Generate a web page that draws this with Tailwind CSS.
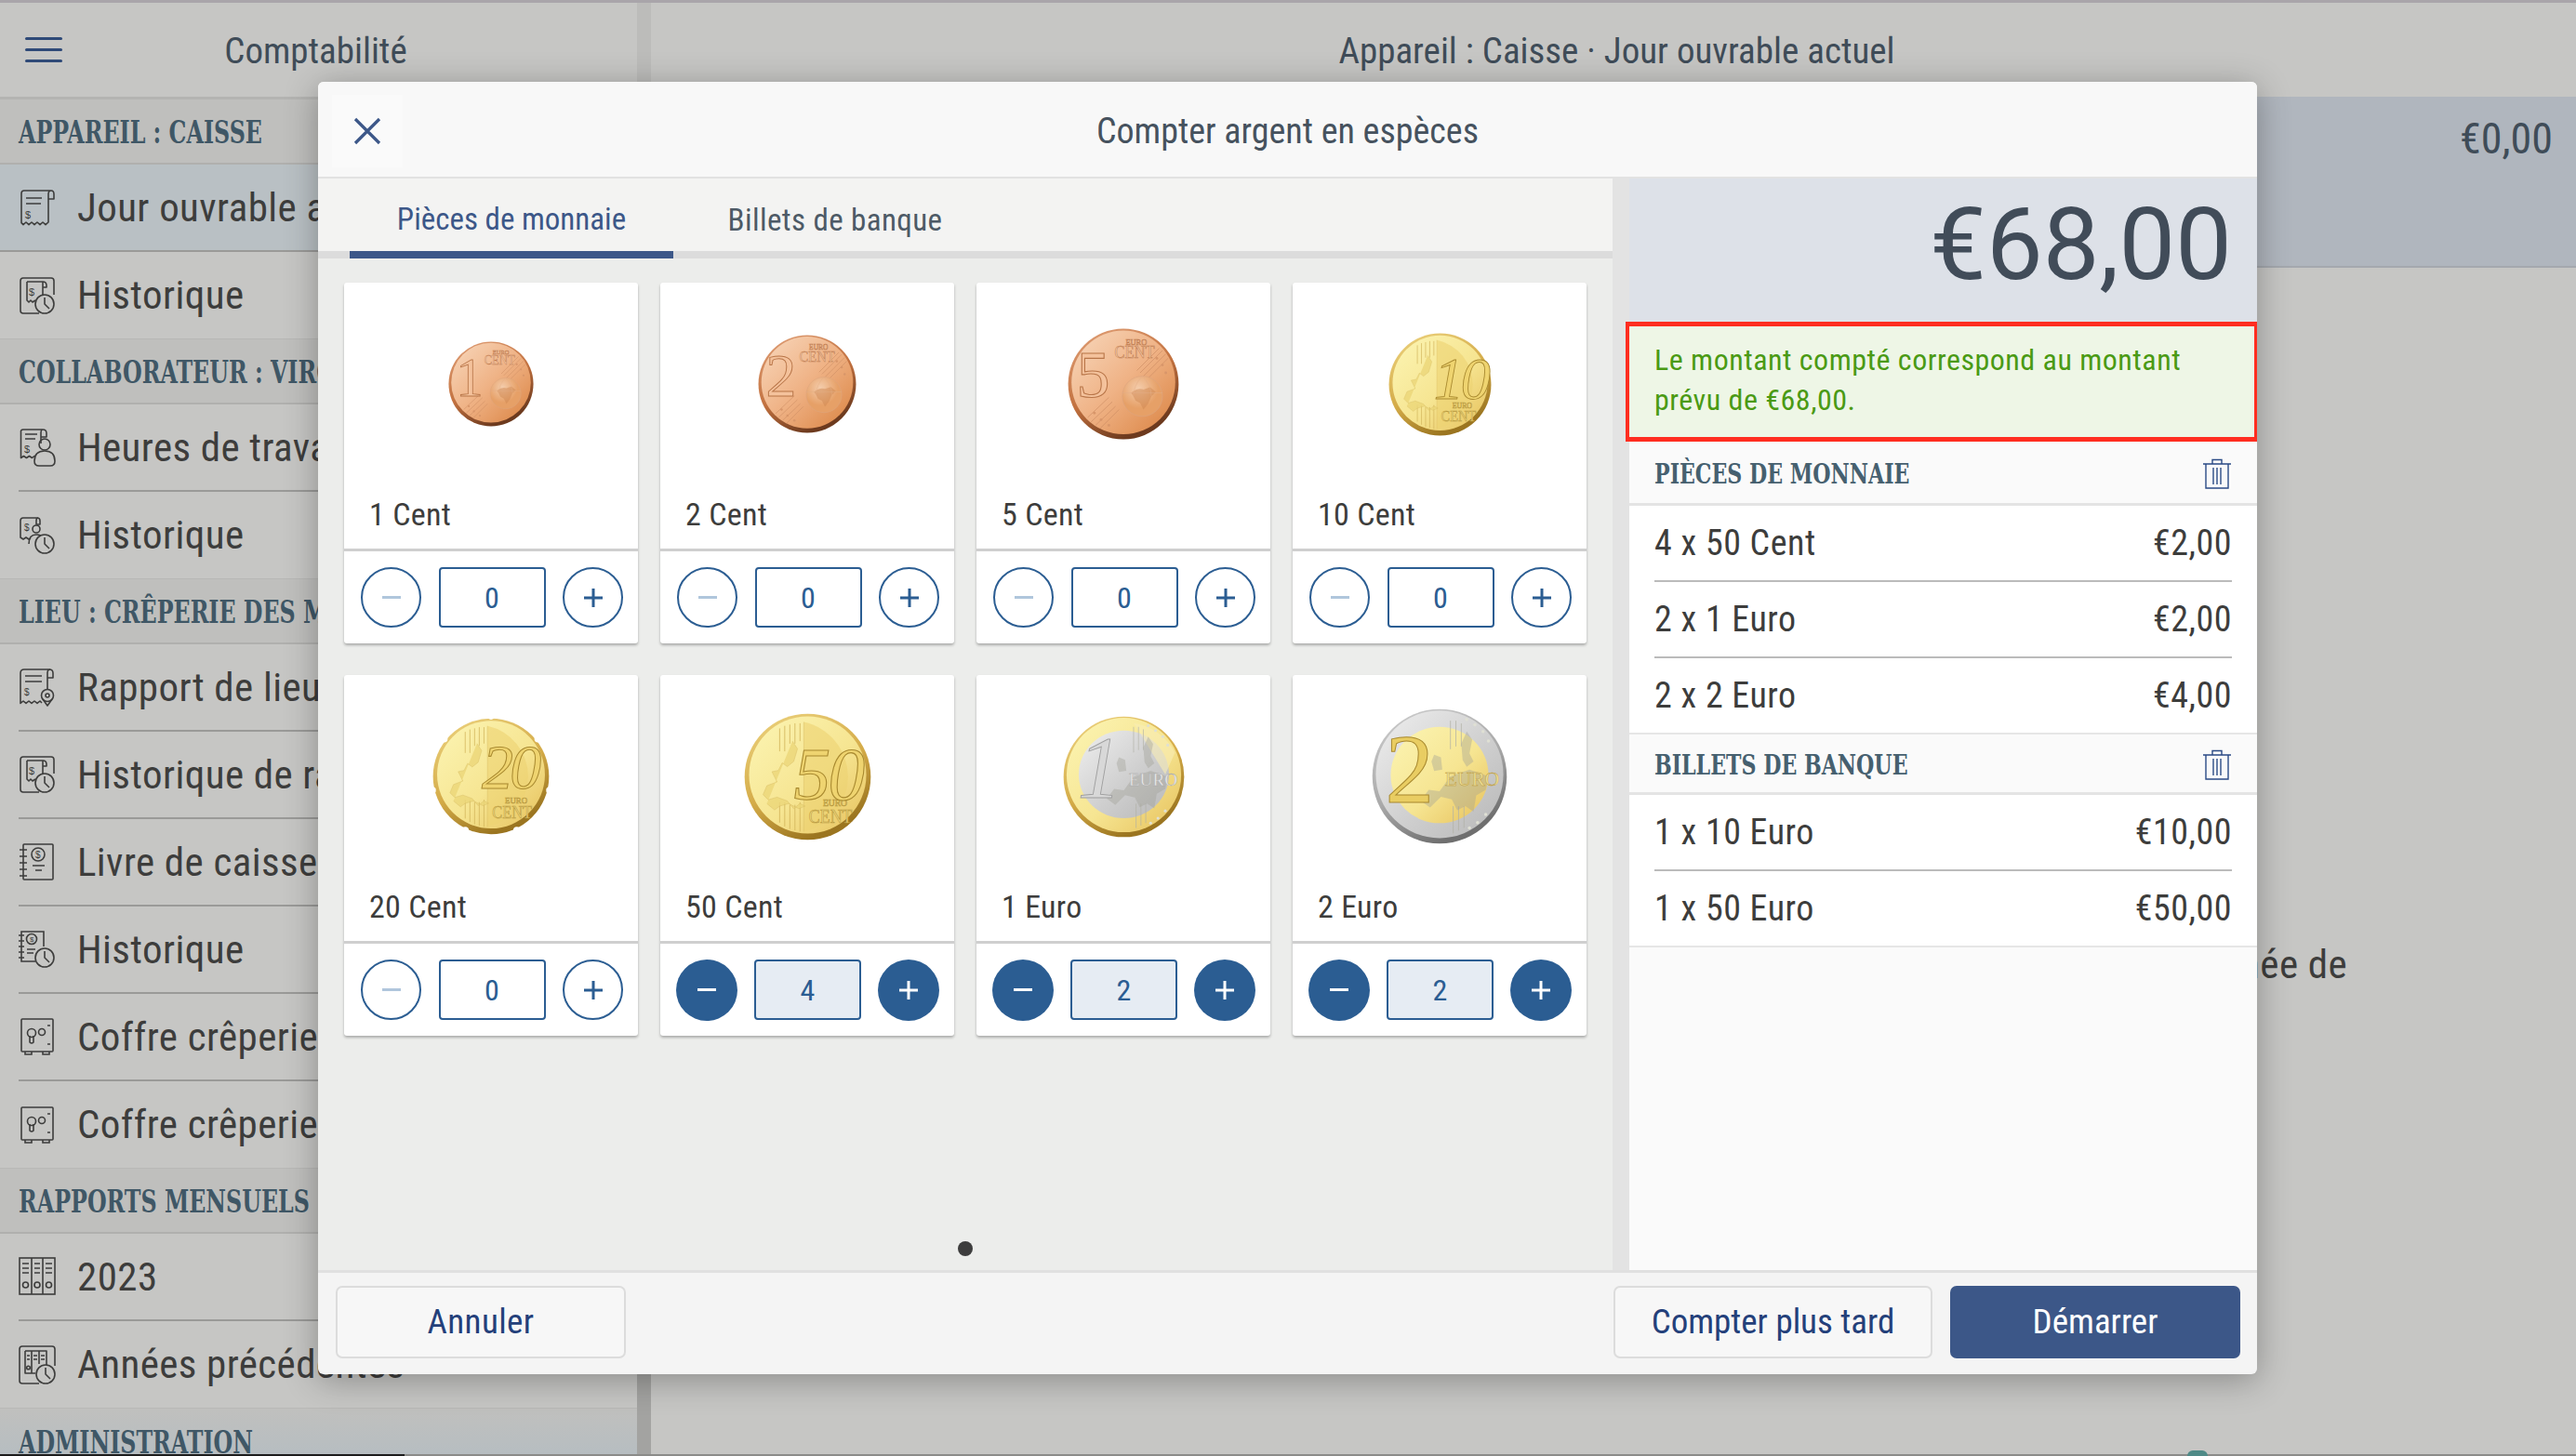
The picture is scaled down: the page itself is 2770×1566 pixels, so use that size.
<html lang="fr">
<head>
  <meta charset="utf-8"/>
  <meta content="width=device-width, initial-scale=1.0" name="viewport"/>
  <title>Compter argent en espèces</title>
  <script src="https://cdn.jsdelivr.net/npm/@tailwindcss/browser@4"></script>
</head>
<body class="bg-[#c6c6c4]">
<!-- shared icons and coin parts -->
<svg class="absolute w-0 h-0" aria-hidden="true">
  <defs>
    <linearGradient id="cu" x1="0" y1="0" x2="1" y2="1"><stop offset="0" stop-color="#f8d8bd"/><stop offset=".5" stop-color="#efb285"/><stop offset="1" stop-color="#da8240"/></linearGradient>
    <linearGradient id="cuRim" x1="0" y1="0" x2=".5" y2="1"><stop offset="0" stop-color="#e2a27a"/><stop offset=".6" stop-color="#c2713f"/><stop offset="1" stop-color="#6d3a1e"/></linearGradient>
    <radialGradient id="cuGlobe" cx=".4" cy=".3"><stop offset="0" stop-color="#f4ccab"/><stop offset="1" stop-color="#e6a067"/></radialGradient>
    <linearGradient id="au" x1="0" y1="0" x2="1" y2="1"><stop offset="0" stop-color="#fcf5b4"/><stop offset=".55" stop-color="#f6e592"/><stop offset="1" stop-color="#e6c05a"/></linearGradient>
    <linearGradient id="auRim" x1="0" y1="0" x2=".5" y2="1"><stop offset="0" stop-color="#eed582"/><stop offset=".6" stop-color="#d4ab48"/><stop offset="1" stop-color="#9b7520"/></linearGradient>
    <linearGradient id="ag" x1="0" y1="0" x2="1" y2="1"><stop offset="0" stop-color="#efefef"/><stop offset=".55" stop-color="#cfcfcf"/><stop offset="1" stop-color="#b7b7b7"/></linearGradient>
    <linearGradient id="agRim" x1="0" y1="0" x2=".5" y2="1"><stop offset="0" stop-color="#cfcfcf"/><stop offset=".6" stop-color="#a9a9a9"/><stop offset="1" stop-color="#6f6f6f"/></linearGradient>

    <g id="cu-face">
      <circle cx="50" cy="50" r="49.5" fill="url(#cuRim)"/>
      <circle cx="50" cy="48.5" r="46.5" fill="url(#cu)"/>
      <g stroke="#cf9066" stroke-width=".6" fill="none">
        <path d="M62 38 L82 18 M65 40 L85 20 M68 43 L88 23 M71 46 L90 27 M29 90 L46 73 M25 87 L43 70 M21 84 L40 66 M18 80 L37 62"/>
      </g>
      <g fill="#d8966a">
        <circle cx="80" cy="27" r="1.2"/><circle cx="85" cy="33" r="1.2"/><circle cx="88" cy="40" r="1.2"/><circle cx="24" cy="76" r="1.2"/><circle cx="30" cy="82" r="1.2"/><circle cx="37" cy="87" r="1.2"/>
      </g>
      <circle cx="67" cy="61" r="18" fill="url(#cuGlobe)" stroke="#dca580" stroke-width=".5"/>
      <path d="M57 58 q6-5 11-3 l6-2 5 4 -4 4 -3 7 -4 5 -3-6 -4-2 -2-4z" fill="#cd8650" opacity=".45"/>
      <path d="M67 43 q-8 8-8 18 M67 43 q8 8 8 18 M49 58 H85" stroke="#e3ad86" stroke-width=".4" fill="none"/>
      <g font-family="Liberation Serif" fill="#f4c9a6" stroke="#c07c50" stroke-width=".45"><text x="52" y="15" font-size="7">EURO</text><text x="42" y="27" font-size="15" textLength="36" lengthAdjust="spacingAndGlyphs">CENT</text></g>
    </g>
    <g id="au-face">
      <path d="M47 7 A44 44 0 0 1 47 93 Z" fill="#ecd271" opacity=".6"/>
      <path d="M47 7 V93" stroke="#dcc066" stroke-width=".4"/>
      <g stroke="#d2b45a" stroke-width=".6" fill="none"><path d="M28 12 V30 M32 10 V30 M36 9 V24 M40 8 V24 M44 8 V22 M28 70 V86 M32 70 V89 M36 72 V91 M40 72 V92 M44 70 V93"/></g>
      <path d="M38 22 l4 6 -3 10 -5 4 -4 -3 -3 6 -5 1 4 8 -8 3 -3 7 4 4 7-2 8 3 5 6 5-4 4 2 -5 2 -8-4 -7 2 -4 3 -6-5" fill="#ecd779" stroke="#d6ba60" stroke-width=".4" opacity=".8"/>
      <g font-family="Liberation Serif" fill="#eed67a" stroke="#b8993f" stroke-width=".45"><text x="62" y="73" font-size="7">EURO</text><text x="51" y="86" font-size="15" textLength="34" lengthAdjust="spacingAndGlyphs">CENT</text></g>
    </g>
    <g id="bimetal-map">
      <g stroke="#b0b0a6" stroke-width=".5" fill="none"><path d="M58 9 V30 M62 9 V28 M66 11 V28 M60 72 V92 M64 72 V90 M68 72 V88"/></g>
      <g fill="#a0a096" opacity=".38"><path d="M70 17 l4 6 -2 10 3 6 -5 4 -3-5 -1-12z"/><path d="M46 34 l5 2 1 9 -6 1 -2-7z"/><path d="M58 50 l14-5 14 5 -2 10 -7 4 -2 12 -6-4 -6 3 -4-8 -8-2 -8 8 -7-5 6-8 8 1z"/></g>
      <g fill="#dfe0d4"><circle cx="70" cy="8" r="1.2"/><circle cx="76" cy="12" r="1.2"/><circle cx="82" cy="17" r="1.2"/><circle cx="86" cy="24" r="1.2"/><circle cx="84" cy="78" r="1.2"/><circle cx="78" cy="84" r="1.2"/><circle cx="72" cy="88" r="1.2"/></g>
    </g>

    <symbol id="i-receipt" viewBox="0 0 40 42"><g fill="none" stroke="currentColor" stroke-width="1.6" stroke-linejoin="round"><path d="M32 9 V37 l-3 2.6 -3-2.6 -3 2.6 -3-2.6 -3 2.6 -3-2.6 -3 2.6 -3-2.6 -3 2.6 -2-2 V6 Q3 3 6 3 H35 q3 0 3 4 v5 h-6 V7 q0-4 3-4"/><path d="M8 11 H25 M8 17 H24"/></g><text x="7" y="33" font-size="11" font-family="Liberation Sans" fill="currentColor">$</text></symbol>
    <symbol id="i-receipt-hist" viewBox="0 0 40 42"><g fill="none" stroke="currentColor" stroke-width="1.6" stroke-linejoin="round"><path d="M22 40 H5 Q2 40 2 37 V5 Q2 2 5 2 H35 Q38 2 38 5 V20"/><path d="M9 6 H26 V22 M9 6 V26 l2 2 2-2 2 2 3-2 M26 6 q4 0 4 4 v2 h-4"/><circle cx="28" cy="30" r="10" fill="#c6c6c4"/><path d="M28 23 V30 L33 35"/></g><text x="11" y="21" font-size="11" font-family="Liberation Sans" fill="currentColor">$</text></symbol>
    <symbol id="i-receipt-person" viewBox="0 0 40 42"><g fill="none" stroke="currentColor" stroke-width="1.6" stroke-linejoin="round"><path d="M19 32 l-2-1.5 -2.5 2 -3-2 -3 2 -3-2 -3 2 V5 Q2 2 5 2 H26 q4 0 4 4 v4 h-6 V6 q0-4 2-4 M24 10 V17"/><path d="M7 7 H20 M7 12 H18"/><circle cx="28" cy="18" r="6"/><path d="M17 36 q0-11 11-11 t11 11 q0 5 -5 5 H22 q-5 0 -5-5z" fill="#c6c6c4"/></g><text x="6" y="27" font-size="11" font-family="Liberation Sans" fill="currentColor">$</text></symbol>
    <symbol id="i-person-hist" viewBox="0 0 40 42"><g fill="none" stroke="currentColor" stroke-width="1.6" stroke-linejoin="round"><path d="M13 24 l-2 1 -3-2 -3 2 -3-2 V5 Q2 2 5 2 H20 q3 0 3 3 v4 h-4 V5 q0-3 2-3"/><circle cx="19" cy="14" r="4"/><path d="M11 30 q0-10 8-10 q5 0 7 3"/><circle cx="28" cy="30" r="10" fill="#c6c6c4"/><path d="M28 23 V30 L33 35"/></g><text x="6" y="16" font-size="10" font-family="Liberation Sans" fill="currentColor">$</text></symbol>
    <symbol id="i-receipt-pin" viewBox="0 0 40 42"><g fill="none" stroke="currentColor" stroke-width="1.6" stroke-linejoin="round"><path d="M25 38 l-2-2 -3 2.4 -3-2.4 -3 2.4 -3-2.4 -3 2.4 -3-2.4 -3 2.4 V6 Q2 2 6 2 H33 q4 0 4 4 v5 h-6 V6 q0-4 3-4 M31 11 V23"/><path d="M7 9 H25 M7 15 H25"/><circle cx="31" cy="30" r="6.5" fill="#c6c6c4"/><path d="M26 34 L31 41 L36 34"/><circle cx="31" cy="30" r="2"/></g><text x="6" y="30" font-size="10" font-family="Liberation Sans" fill="currentColor">$</text></symbol>
    <symbol id="i-book" viewBox="0 0 40 42"><g fill="none" stroke="currentColor" stroke-width="1.6"><rect x="5" y="2" width="32" height="38" rx="1"/><path d="M1 8 H9 M1 15 H9 M1 22 H9 M1 29 H9 M1 36 H9"/><circle cx="21" cy="13" r="7"/><path d="M15 25 H28 M18 30 H25"/></g><text x="18" y="17" font-size="10" font-family="Liberation Sans" fill="currentColor">$</text></symbol>
    <symbol id="i-book-hist" viewBox="0 0 40 42"><g fill="none" stroke="currentColor" stroke-width="1.6"><path d="M18 34 H3 V2 H27 V18"/><path d="M0 6 H6 M0 12 H6 M0 18 H6 M0 24 H6 M0 30 H6"/><circle cx="14" cy="10" r="5.5"/><path d="M9 21 H18 M9 25 H16"/><circle cx="28" cy="30" r="10" fill="#c6c6c4"/><path d="M28 23 V30 L33 35"/></g><text x="12" y="13" font-size="8" font-family="Liberation Sans" fill="currentColor">$</text></symbol>
    <symbol id="i-safe" viewBox="0 0 40 42"><g fill="none" stroke="currentColor" stroke-width="1.6"><rect x="3" y="2" width="34" height="35" rx="1"/><path d="M7 37 v3 h7 v-3 M26 37 v3 h7 v-3"/><circle cx="14" cy="17" r="4.5"/><path d="M12 20 v7 q2 2 4 0 v-7"/><circle cx="25" cy="16" r="3.5"/><path d="M31 9 H34 M31 29 H34"/></g></symbol>
    <symbol id="i-binders" viewBox="0 0 40 42"><g fill="none" stroke="currentColor" stroke-width="1.6"><rect x="1" y="1" width="38" height="39"/><path d="M14 1 V40 M26 1 V40"/><path d="M4 7 H11 M4 12 H11 M4 17 H11 M17 7 H23 M17 12 H23 M17 17 H23 M29 7 H36 M29 12 H36 M29 17 H36"/><circle cx="7.5" cy="30" r="3"/><circle cx="20" cy="30" r="3"/><circle cx="32.5" cy="30" r="3"/></g></symbol>
    <symbol id="i-binders-hist" viewBox="0 0 40 42"><g fill="none" stroke="currentColor" stroke-width="1.6" stroke-linejoin="round"><path d="M22 41 H4 Q1 41 1 38 V4 Q1 1 4 1 H36 Q39 1 39 4 V22"/><path d="M7 6 H30 V22 M7 6 V30 H18 M14 6 V30 M22 6 V20"/><path d="M9 11 H12 M9 15 H12 M16 11 H20 M16 15 H20 M24 11 H28 M24 15 H28"/><circle cx="10.5" cy="24" r="1.8"/><circle cx="29" cy="31" r="10" fill="#c6c6c4"/><path d="M29 24 V31 L34 36"/></g></symbol>
    <symbol id="i-trash" viewBox="0 0 32 33"><g fill="none" stroke="#2a4a85" stroke-width="1.4"><path d="M1 6 H31 M11 6 V1.5 H21 V6 M4 6 V32 H28 V6 M12 10 V28 M16 10 V28 M20 10 V28"/></g></symbol>
    <symbol id="i-plus" viewBox="0 0 20 20"><path d="M0 10 H20 M10 0 V20" stroke="currentColor" stroke-width="3" fill="none"/></symbol>
  </defs>
</svg>

<div class="relative w-[2770px] h-[1566px] overflow-hidden bg-[#c6c6c4] border-t-[3px] border-[#a9a5aa] font-['Roboto',sans-serif] [font-stretch:75%] text-[#3d3d3c]">
  <div class="flex h-full">
    <!-- menu -->
    <aside class="w-[685px] shrink-0 flex flex-col overflow-hidden">
      <div class="relative h-[104px] shrink-0 flex items-center justify-center pr-[6px] pt-[3px] text-[39px] text-[#3f4c58] border-b-[3px] border-[#b4b4b2]">
        <div class="absolute left-[27px] top-[37px] w-[40px] flex flex-col gap-[9px]">
          <span class="h-[3px] rounded-full bg-[#2f4a78]"></span>
          <span class="h-[3px] rounded-full bg-[#2f4a78]"></span>
          <span class="h-[3px] rounded-full bg-[#2f4a78]"></span>
        </div>
        Comptabilité
      </div>

      <div class="h-[70px] shrink-0 flex items-center pl-[20px] pt-[3px] bg-[#bfbfbd] border-b-2 border-[#b0b0ae] text-[#3f5766] whitespace-nowrap"><span class="inline-block origin-left scale-x-[.8] font-['DejaVu_Serif',serif] font-bold text-[33px]">APPAREIL : CAISSE</span></div>
      <div class="h-[94px] shrink-0 flex items-center gap-[23px] pl-[20px] bg-[#b9c0c4] border-b-2 border-[#9a9a98] text-[43px] tracking-[.4px] whitespace-nowrap"><svg class="w-[40px] h-[42px] shrink-0"><use href="#i-receipt"/></svg>Jour ouvrable actuel</div>
      <div class="h-[94px] shrink-0 flex items-center gap-[23px] pl-[20px] border-b border-[#b8b8b6] text-[43px] tracking-[.4px] whitespace-nowrap"><svg class="w-[40px] h-[42px] shrink-0"><use href="#i-receipt-hist"/></svg>Historique</div>

      <div class="h-[70px] shrink-0 flex items-center pl-[20px] pt-[3px] bg-[#bfbfbd] border-b-2 border-[#b0b0ae] text-[#3f5766] whitespace-nowrap"><span class="inline-block origin-left scale-x-[.8] font-['DejaVu_Serif',serif] font-bold text-[33px]">COLLABORATEUR : VIRGINIE</span></div>
      <div class="h-[94px] shrink-0 flex items-center gap-[23px] ml-[20px] border-b-2 border-[#9a9a98] text-[43px] tracking-[.4px] whitespace-nowrap"><svg class="w-[40px] h-[42px] shrink-0"><use href="#i-receipt-person"/></svg>Heures de travail</div>
      <div class="h-[94px] shrink-0 flex items-center gap-[23px] pl-[20px] border-b border-[#b8b8b6] text-[43px] tracking-[.4px] whitespace-nowrap"><svg class="w-[40px] h-[42px] shrink-0"><use href="#i-person-hist"/></svg>Historique</div>

      <div class="h-[70px] shrink-0 flex items-center pl-[20px] pt-[3px] bg-[#bfbfbd] border-b-2 border-[#b0b0ae] text-[#3f5766] whitespace-nowrap"><span class="inline-block origin-left scale-x-[.8] font-['DejaVu_Serif',serif] font-bold text-[33px]">LIEU : CRÊPERIE DES MARCHANDS</span></div>
      <div class="h-[94px] shrink-0 flex items-center gap-[23px] ml-[20px] border-b-2 border-[#9a9a98] text-[43px] tracking-[.4px] whitespace-nowrap"><svg class="w-[40px] h-[42px] shrink-0"><use href="#i-receipt-pin"/></svg>Rapport de lieu</div>
      <div class="h-[94px] shrink-0 flex items-center gap-[23px] ml-[20px] border-b-2 border-[#9a9a98] text-[43px] tracking-[.4px] whitespace-nowrap"><svg class="w-[40px] h-[42px] shrink-0"><use href="#i-receipt-hist"/></svg>Historique de rapport</div>
      <div class="h-[94px] shrink-0 flex items-center gap-[23px] ml-[20px] border-b-2 border-[#9a9a98] text-[43px] tracking-[.4px] whitespace-nowrap"><svg class="w-[40px] h-[42px] shrink-0"><use href="#i-book"/></svg>Livre de caisse</div>
      <div class="h-[94px] shrink-0 flex items-center gap-[23px] ml-[20px] border-b-2 border-[#9a9a98] text-[43px] tracking-[.4px] whitespace-nowrap"><svg class="w-[40px] h-[42px] shrink-0"><use href="#i-book-hist"/></svg>Historique</div>
      <div class="h-[94px] shrink-0 flex items-center gap-[23px] ml-[20px] border-b-2 border-[#9a9a98] text-[43px] tracking-[.4px] whitespace-nowrap"><svg class="w-[40px] h-[42px] shrink-0"><use href="#i-safe"/></svg>Coffre crêperie</div>
      <div class="h-[94px] shrink-0 flex items-center gap-[23px] pl-[20px] border-b border-[#b8b8b6] text-[43px] tracking-[.4px] whitespace-nowrap"><svg class="w-[40px] h-[42px] shrink-0"><use href="#i-safe"/></svg>Coffre crêperie</div>

      <div class="h-[70px] shrink-0 flex items-center pl-[20px] pt-[3px] bg-[#bfbfbd] border-b-2 border-[#b0b0ae] text-[#3f5766] whitespace-nowrap"><span class="inline-block origin-left scale-x-[.8] font-['DejaVu_Serif',serif] font-bold text-[33px]">RAPPORTS MENSUELS</span></div>
      <div class="h-[94px] shrink-0 flex items-center gap-[23px] ml-[20px] border-b-2 border-[#9a9a98] text-[43px] tracking-[.4px] whitespace-nowrap"><svg class="w-[40px] h-[42px] shrink-0"><use href="#i-binders"/></svg>2023</div>
      <div class="h-[94px] shrink-0 flex items-center gap-[23px] pl-[20px] border-b border-[#b8b8b6] text-[43px] tracking-[.4px] whitespace-nowrap"><svg class="w-[40px] h-[42px] shrink-0"><use href="#i-binders-hist"/></svg>Années précédentes</div>

      <div class="h-[70px] shrink-0 flex items-center pl-[20px] pt-[3px] bg-gradient-to-b from-[#c0c0be] to-[#b2bcc2] text-[#3f5766] whitespace-nowrap"><span class="inline-block origin-left scale-x-[.8] font-['DejaVu_Serif',serif] font-bold text-[33px]">ADMINISTRATION</span></div>
    </aside>

    <div class="w-[15px] shrink-0 flex flex-col">
      <div class="h-[104px] bg-[#bcbcba]"></div>
      <div class="flex-1 bg-[#a3a3a1]"></div>
    </div>

    <!-- page behind the dialog -->
    <main class="flex-1 flex flex-col">
      <div class="h-[101px] shrink-0 flex items-center justify-center pt-[3px] pl-[7px] text-[39px] text-[#3f4c58]">Appareil : Caisse · Jour ouvrable actuel</div>
      <div class="h-[184px] shrink-0 flex justify-end pt-[11px] pr-[25px] bg-[#b0b6be] border-b-2 border-[#a4a8ae] text-[46px] text-[#3f4c58]">€0,00</div>
      <div class="flex justify-end pt-[717px] pr-[246px] text-[43px] tracking-[.4px]">Aucune donnée de</div>
    </main>
  </div>

  <div class="absolute left-0 right-0 bottom-0 h-[2px] bg-[#8b8b89]"></div>
  <div class="absolute left-0 bottom-0 w-[435px] h-[2px] bg-[#1c1c1c]"></div>
  <div class="absolute left-[2352px] bottom-0 w-[22px] h-[6px] rounded-t-full bg-[#4f8a87]"></div>

  <!-- dialog -->
  <div class="absolute left-[342px] top-[85px] w-[2085px] h-[1390px] flex flex-col rounded-[6px] overflow-hidden bg-[#f4f4f4] shadow-[0_6px_36px_rgba(0,0,0,0.3)]">
    <header class="relative h-[104px] shrink-0 flex items-center justify-center pt-[4px] bg-[#f8f8f8] border-b-2 border-[#e2e2e2] text-[38px] text-[#46525e]">
      <button class="absolute left-[15px] top-[14px] w-[76px] h-[78px] flex items-center justify-center bg-[#fafafa]">
        <svg class="w-[30px] h-[30px]" viewBox="0 0 30 30"><path d="M2 2 L28 28 M28 2 L2 28" stroke="#3c5788" stroke-width="3.2" fill="none"/></svg>
      </button>
      Compter argent en espèces
    </header>

    <div class="flex-1 flex min-h-0">
      <!-- left pane -->
      <section class="w-[1392px] shrink-0 flex flex-col bg-[#ecedeb]">
        <nav class="h-[86px] shrink-0 flex pl-[34px] bg-[#f3f3f2] border-b-[8px] border-[#dcdcdc] text-[33px]">
          <a class="w-[348px] h-[86px] flex items-center justify-center pt-[10px] border-b-[8px] border-[#3c5788] text-[#3c5788]">Pièces de monnaie</a>
          <a class="w-[348px] h-[78px] flex items-center justify-center pt-[12px] tracking-[.4px] text-[#4d5a66]">Billets de banque</a>
        </nav>

        <div class="grid grid-cols-[repeat(4,316px)] gap-x-[24px] gap-y-[34px] pl-[28px] pt-[26px]">
          <!-- 1 cent -->
          <article class="h-[388px] flex flex-col bg-white rounded-[3px] shadow-[0_2px_3px_rgba(0,0,0,0.28)]">
            <div class="h-[218px] flex items-center justify-center">
              <svg class="w-[92px] h-[92px] overflow-visible" viewBox="0 0 100 100"><use href="#cu-face"/><text x="9" y="64" font-family="Liberation Serif" font-size="64" fill="#f4c29c" stroke="#b87548" stroke-width=".9">1</text></svg>
            </div>
            <div class="h-[68px] flex items-center pl-[27px] pb-[6px] text-[34px] tracking-[.3px]">1 Cent</div>
            <div class="flex-1 flex items-center justify-between pl-[18px] pr-[16px] border-t-[3px] border-[#cfcfcf]">
              <button class="w-[65px] h-[65px] rounded-full border-2 border-[#2b5d92] flex items-center justify-center"><span class="w-[20px] h-[3px] bg-[#b0c6dc]"></span></button>
              <div class="w-[115px] h-[65px] rounded-[4px] border-[2.5px] border-[#2b5d92] flex items-center justify-center text-[32px] text-[#2b5d92]">0</div>
              <button class="w-[65px] h-[65px] rounded-full border-2 border-[#2b5d92] flex items-center justify-center text-[#2b5d92]"><svg class="w-[20px] h-[20px]"><use href="#i-plus"/></svg></button>
            </div>
          </article>
          <!-- 2 cent -->
          <article class="h-[388px] flex flex-col bg-white rounded-[3px] shadow-[0_2px_3px_rgba(0,0,0,0.28)]">
            <div class="h-[218px] flex items-center justify-center">
              <svg class="w-[106px] h-[106px] overflow-visible" viewBox="0 0 100 100"><use href="#cu-face"/><text x="8" y="62" font-family="Liberation Serif" font-size="62" fill="#f4c29c" stroke="#b87548" stroke-width=".9">2</text></svg>
            </div>
            <div class="h-[68px] flex items-center pl-[27px] pb-[6px] text-[34px] tracking-[.3px]">2 Cent</div>
            <div class="flex-1 flex items-center justify-between pl-[18px] pr-[16px] border-t-[3px] border-[#cfcfcf]">
              <button class="w-[65px] h-[65px] rounded-full border-2 border-[#2b5d92] flex items-center justify-center"><span class="w-[20px] h-[3px] bg-[#b0c6dc]"></span></button>
              <div class="w-[115px] h-[65px] rounded-[4px] border-[2.5px] border-[#2b5d92] flex items-center justify-center text-[32px] text-[#2b5d92]">0</div>
              <button class="w-[65px] h-[65px] rounded-full border-2 border-[#2b5d92] flex items-center justify-center text-[#2b5d92]"><svg class="w-[20px] h-[20px]"><use href="#i-plus"/></svg></button>
            </div>
          </article>
          <!-- 5 cent -->
          <article class="h-[388px] flex flex-col bg-white rounded-[3px] shadow-[0_2px_3px_rgba(0,0,0,0.28)]">
            <div class="h-[218px] flex items-center justify-center">
              <svg class="w-[120px] h-[120px] overflow-visible" viewBox="0 0 100 100"><use href="#cu-face"/><text x="8" y="62" font-family="Liberation Serif" font-size="60" fill="#f4c29c" stroke="#b87548" stroke-width=".9">5</text></svg>
            </div>
            <div class="h-[68px] flex items-center pl-[27px] pb-[6px] text-[34px] tracking-[.3px]">5 Cent</div>
            <div class="flex-1 flex items-center justify-between pl-[18px] pr-[16px] border-t-[3px] border-[#cfcfcf]">
              <button class="w-[65px] h-[65px] rounded-full border-2 border-[#2b5d92] flex items-center justify-center"><span class="w-[20px] h-[3px] bg-[#b0c6dc]"></span></button>
              <div class="w-[115px] h-[65px] rounded-[4px] border-[2.5px] border-[#2b5d92] flex items-center justify-center text-[32px] text-[#2b5d92]">0</div>
              <button class="w-[65px] h-[65px] rounded-full border-2 border-[#2b5d92] flex items-center justify-center text-[#2b5d92]"><svg class="w-[20px] h-[20px]"><use href="#i-plus"/></svg></button>
            </div>
          </article>
          <!-- 10 cent -->
          <article class="h-[388px] flex flex-col bg-white rounded-[3px] shadow-[0_2px_3px_rgba(0,0,0,0.28)]">
            <div class="h-[218px] flex items-center justify-center">
              <svg class="w-[111px] h-[111px] overflow-visible" viewBox="0 0 100 100"><circle cx="50" cy="50" r="49.5" fill="url(#auRim)"/><circle cx="50" cy="48.5" r="46" fill="url(#au)"/><use href="#au-face"/><text x="44" y="64" font-family="Liberation Serif" font-style="italic" font-size="58" letter-spacing="-3" fill="#efd470" stroke="#a98a30" stroke-width=".8">10</text></svg>
            </div>
            <div class="h-[68px] flex items-center pl-[27px] pb-[6px] text-[34px] tracking-[.3px]">10 Cent</div>
            <div class="flex-1 flex items-center justify-between pl-[18px] pr-[16px] border-t-[3px] border-[#cfcfcf]">
              <button class="w-[65px] h-[65px] rounded-full border-2 border-[#2b5d92] flex items-center justify-center"><span class="w-[20px] h-[3px] bg-[#b0c6dc]"></span></button>
              <div class="w-[115px] h-[65px] rounded-[4px] border-[2.5px] border-[#2b5d92] flex items-center justify-center text-[32px] text-[#2b5d92]">0</div>
              <button class="w-[65px] h-[65px] rounded-full border-2 border-[#2b5d92] flex items-center justify-center text-[#2b5d92]"><svg class="w-[20px] h-[20px]"><use href="#i-plus"/></svg></button>
            </div>
          </article>
          <!-- 20 cent -->
          <article class="h-[388px] flex flex-col bg-white rounded-[3px] shadow-[0_2px_3px_rgba(0,0,0,0.28)]">
            <div class="h-[218px] flex items-center justify-center">
              <svg class="w-[126px] h-[126px] overflow-visible" viewBox="0 0 100 100"><circle cx="50" cy="50" r="49.5" fill="url(#auRim)"/><circle cx="50" cy="48.5" r="46" fill="url(#au)"/><use href="#au-face"/><text x="42" y="60" font-family="Liberation Serif" font-style="italic" font-size="54" letter-spacing="-3" fill="#efd470" stroke="#a98a30" stroke-width=".8">20</text><g fill="#fff"><circle cx="50" cy="-1.5" r="3"/><circle cx="90" cy="18" r="3"/><circle cx="100" cy="62" r="3"/><circle cx="72" cy="96" r="3"/><circle cx="28" cy="96" r="3"/><circle cx="0" cy="62" r="3"/><circle cx="10" cy="18" r="3"/></g></svg>
            </div>
            <div class="h-[68px] flex items-center pl-[27px] pb-[6px] text-[34px] tracking-[.3px]">20 Cent</div>
            <div class="flex-1 flex items-center justify-between pl-[18px] pr-[16px] border-t-[3px] border-[#cfcfcf]">
              <button class="w-[65px] h-[65px] rounded-full border-2 border-[#2b5d92] flex items-center justify-center"><span class="w-[20px] h-[3px] bg-[#b0c6dc]"></span></button>
              <div class="w-[115px] h-[65px] rounded-[4px] border-[2.5px] border-[#2b5d92] flex items-center justify-center text-[32px] text-[#2b5d92]">0</div>
              <button class="w-[65px] h-[65px] rounded-full border-2 border-[#2b5d92] flex items-center justify-center text-[#2b5d92]"><svg class="w-[20px] h-[20px]"><use href="#i-plus"/></svg></button>
            </div>
          </article>
          <!-- 50 cent -->
          <article class="h-[388px] flex flex-col bg-white rounded-[3px] shadow-[0_2px_3px_rgba(0,0,0,0.28)]">
            <div class="h-[218px] flex items-center justify-center">
              <svg class="w-[137px] h-[137px] overflow-visible" viewBox="0 0 100 100"><circle cx="50" cy="50" r="49.5" fill="url(#auRim)"/><circle cx="50" cy="48.5" r="46" fill="url(#au)"/><use href="#au-face"/><text x="39" y="68" font-family="Liberation Serif" font-style="italic" font-size="58" letter-spacing="-2" fill="#efd470" stroke="#a98a30" stroke-width=".8">50</text></svg>
            </div>
            <div class="h-[68px] flex items-center pl-[27px] pb-[6px] text-[34px] tracking-[.3px]">50 Cent</div>
            <div class="flex-1 flex items-center justify-between pl-[17px] pr-[16px] border-t-[3px] border-[#cfcfcf]">
              <button class="w-[66px] h-[66px] rounded-full bg-[#2b5d92] flex items-center justify-center"><span class="w-[20px] h-[3px] bg-white"></span></button>
              <div class="w-[115px] h-[65px] rounded-[4px] border-[2.5px] border-[#2b5d92] bg-[#e6ecf3] flex items-center justify-center text-[32px] text-[#2b5d92]">4</div>
              <button class="w-[66px] h-[66px] rounded-full bg-[#2b5d92] flex items-center justify-center text-white"><svg class="w-[20px] h-[20px]"><use href="#i-plus"/></svg></button>
            </div>
          </article>
          <!-- 1 euro -->
          <article class="h-[388px] flex flex-col bg-white rounded-[3px] shadow-[0_2px_3px_rgba(0,0,0,0.28)]">
            <div class="h-[218px] flex items-center justify-center">
              <svg class="w-[131px] h-[131px] overflow-visible" viewBox="0 0 100 100"><circle cx="50" cy="50" r="49.5" fill="url(#auRim)"/><circle cx="50" cy="48.5" r="47" fill="url(#au)"/><ellipse cx="50" cy="48" rx="37" ry="36" fill="url(#ag)"/><path d="M58 6 A46 46 0 0 1 92 30 L84 48 L62 12z" fill="#f8edb6" opacity=".6"/><use href="#bimetal-map"/><text x="12" y="67" font-family="Liberation Serif" font-style="italic" font-size="72" fill="#d8d8d8" stroke="#9f9f9f" stroke-width=".7">1</text><text x="54" y="57" font-family="Liberation Serif" font-size="14" textLength="40" lengthAdjust="spacingAndGlyphs" fill="#ececec" stroke="#a9a9a9" stroke-width=".3">EURO</text></svg>
            </div>
            <div class="h-[68px] flex items-center pl-[27px] pb-[6px] text-[34px] tracking-[.3px]">1 Euro</div>
            <div class="flex-1 flex items-center justify-between pl-[17px] pr-[16px] border-t-[3px] border-[#cfcfcf]">
              <button class="w-[66px] h-[66px] rounded-full bg-[#2b5d92] flex items-center justify-center"><span class="w-[20px] h-[3px] bg-white"></span></button>
              <div class="w-[115px] h-[65px] rounded-[4px] border-[2.5px] border-[#2b5d92] bg-[#e6ecf3] flex items-center justify-center text-[32px] text-[#2b5d92]">2</div>
              <button class="w-[66px] h-[66px] rounded-full bg-[#2b5d92] flex items-center justify-center text-white"><svg class="w-[20px] h-[20px]"><use href="#i-plus"/></svg></button>
            </div>
          </article>
          <!-- 2 euro -->
          <article class="h-[388px] flex flex-col bg-white rounded-[3px] shadow-[0_2px_3px_rgba(0,0,0,0.28)]">
            <div class="h-[218px] flex items-center justify-center">
              <svg class="w-[146px] h-[146px] overflow-visible" viewBox="0 0 100 100"><circle cx="50" cy="50" r="49.5" fill="url(#agRim)"/><circle cx="50" cy="48.5" r="47" fill="url(#ag)"/><ellipse cx="50" cy="49" rx="36" ry="35.5" fill="url(#au)"/><use href="#bimetal-map"/><text x="10" y="69" font-family="Liberation Serif" font-size="72" fill="#e9cd62" stroke="#a98a30" stroke-width=".7">2</text><text x="54" y="57" font-family="Liberation Serif" font-size="14" textLength="40" lengthAdjust="spacingAndGlyphs" fill="#f1e39a" stroke="#b9983e" stroke-width=".3">EURO</text></svg>
            </div>
            <div class="h-[68px] flex items-center pl-[27px] pb-[6px] text-[34px] tracking-[.3px]">2 Euro</div>
            <div class="flex-1 flex items-center justify-between pl-[17px] pr-[16px] border-t-[3px] border-[#cfcfcf]">
              <button class="w-[66px] h-[66px] rounded-full bg-[#2b5d92] flex items-center justify-center"><span class="w-[20px] h-[3px] bg-white"></span></button>
              <div class="w-[115px] h-[65px] rounded-[4px] border-[2.5px] border-[#2b5d92] bg-[#e6ecf3] flex items-center justify-center text-[32px] text-[#2b5d92]">2</div>
              <button class="w-[66px] h-[66px] rounded-full bg-[#2b5d92] flex items-center justify-center text-white"><svg class="w-[20px] h-[20px]"><use href="#i-plus"/></svg></button>
            </div>
          </article>
        </div>

        <div class="mt-auto pb-[15px] flex justify-center"><span class="w-[16px] h-[16px] rounded-full bg-[#3d3d3d]"></span></div>
      </section>

      <div class="w-[18px] shrink-0 bg-[#e3e3e3]"></div>

      <!-- right pane -->
      <section class="flex-1 flex flex-col bg-[#fafafa]">
        <div class="h-[155px] shrink-0 flex items-center justify-end pr-[27px] pb-[14px] bg-[#dde1e8] text-[108px] leading-none [font-stretch:100%] text-[#414c59]">€68,00</div>
        <div class="relative h-[128px] shrink-0 pt-[19px] pl-[27px] bg-[#eef6e6] text-[32px] leading-[43px] tracking-[.5px] text-[#4a9a14]">
          Le montant compté correspond au montant<br/>prévu de €68,00.
          <div class="absolute -left-[4px] -right-[1px] -top-[1px] bottom-0 border-x-[4px] border-y-[5px] border-[#ff2d20]"></div>
        </div>

        <div class="h-[69px] shrink-0 flex items-center justify-between pl-[27px] pr-[27px] pt-[2px] border-b-[3px] border-[#e4e4e4] text-[#46606f] whitespace-nowrap">
          <span class="inline-block origin-left scale-x-[.82] font-['DejaVu_Serif',serif] font-bold text-[30px]">PIÈCES DE MONNAIE</span>
          <svg class="w-[32px] h-[33px] shrink-0"><use href="#i-trash"/></svg>
        </div>
        <div class="bg-white text-[38px] tracking-[.5px]">
          <div class="h-[82px] mx-[27px] flex items-center justify-between border-b-2 border-[#bbbbbb]"><span>4 x 50 Cent</span><span>€2,00</span></div>
          <div class="h-[82px] mx-[27px] flex items-center justify-between border-b-2 border-[#bbbbbb]"><span>2 x 1 Euro</span><span>€2,00</span></div>
          <div class="h-[82px] px-[27px] flex items-center justify-between border-b-2 border-[#e6e6e6]"><span>2 x 2 Euro</span><span>€4,00</span></div>
        </div>

        <div class="h-[65px] shrink-0 flex items-center justify-between pl-[27px] pr-[27px] pt-[2px] border-b-[3px] border-[#e4e4e4] text-[#46606f] whitespace-nowrap">
          <span class="inline-block origin-left scale-x-[.82] font-['DejaVu_Serif',serif] font-bold text-[30px]">BILLETS DE BANQUE</span>
          <svg class="w-[32px] h-[33px] shrink-0"><use href="#i-trash"/></svg>
        </div>
        <div class="bg-white text-[38px] tracking-[.5px]">
          <div class="h-[82px] mx-[27px] flex items-center justify-between border-b-2 border-[#bbbbbb]"><span>1 x 10 Euro</span><span>€10,00</span></div>
          <div class="h-[82px] px-[27px] flex items-center justify-between border-b-2 border-[#e6e6e6]"><span>1 x 50 Euro</span><span>€50,00</span></div>
        </div>
      </section>
    </div>

    <footer class="h-[112px] shrink-0 flex items-center justify-between pl-[19px] pr-[18px] pb-[3px] border-t-[3px] border-[#e0e0e0] text-[37px] text-[#24407a]">
      <button class="w-[312px] h-[78px] rounded-[7px] border-2 border-[#dcdcdc] bg-[#f7f7f7] tracking-[.4px]">Annuler</button>
      <div class="flex gap-[19px]">
        <button class="w-[343px] h-[78px] rounded-[7px] border-2 border-[#dcdcdc] bg-[#f7f7f7]">Compter plus tard</button>
        <button class="w-[312px] h-[78px] rounded-[7px] bg-[#3c5788] text-white">Démarrer</button>
      </div>
    </footer>
  </div>
</div>
</body>
</html>
